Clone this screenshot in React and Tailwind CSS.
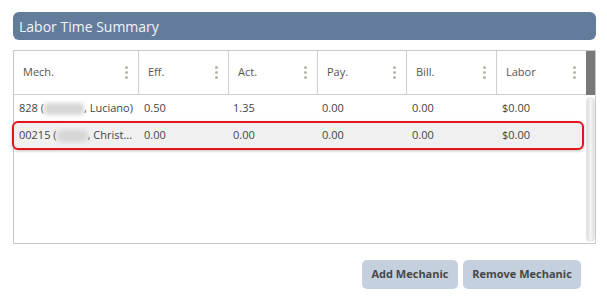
import React from 'react';

const cols = 'grid grid-cols-[125px_90px_89px_89px_90px_89px]';

const Dots = () => (
    <span className="flex flex-col gap-[2px] mr-[10px]">
        <span className="w-[3px] h-[3px] rounded-full bg-[#b3b8a4]" />
        <span className="w-[3px] h-[3px] rounded-full bg-[#b3b8a4]" />
        <span className="w-[3px] h-[3px] rounded-full bg-[#b3b8a4]" />
    </span>
);

const Hidden = ({ w }) => (
    <span className={`inline-block align-middle h-[12px] ${w} bg-[#d6d6d6] blur-[2px] rounded-sm`} />
);

const App = () => {
    const headers = ['Mech.', 'Eff.', 'Act.', 'Pay.', 'Bill.', 'Labor'];

    return (
        <div className="w-[607px] h-[300px] bg-white font-['Open_Sans',sans-serif] text-[11px] text-[#444]">
            <div className="pt-[12px] pl-[13px] pr-[11px]">
                {/* Title bar */}
                <div className="h-[28px] rounded-[6px] bg-[#647c9b] flex items-center pl-[6px] text-[14px] text-[#f2f4f7]">
                    Labor Time Summary
                </div>

                {/* Grid */}
                <div className="mt-[10px] h-[194px] border border-[#c9c9c9] flex">
                    <div className="w-[572px] flex flex-col">
                        <div className={`${cols} h-[44px] border-b border-[#cfcfcf]`}>
                            {headers.map((h, i) => (
                                <div
                                    key={h}
                                    className={`flex items-center justify-between pl-[9px] text-[#555] ${i < 5 ? 'border-r border-[#cfcfcf]' : ''}`}
                                >
                                    <span>{h}</span>
                                    <Dots />
                                </div>
                            ))}
                        </div>

                        <div className={`${cols} h-[26px] items-center`}>
                            <div className="pl-[5px] whitespace-nowrap">828 (<Hidden w="w-[40px]" />, Luciano)</div>
                            <div className="pl-[5px]">0.50</div>
                            <div className="pl-[4px]">1.35</div>
                            <div className="pl-[4px]">0.00</div>
                            <div className="pl-[5px]">0.00</div>
                            <div className="pl-[5px]">$0.00</div>
                        </div>

                        <div className="-ml-[2px] w-[572px] h-[29px] rounded-[6px] border-2 border-[#e4161b] bg-[#f0f0f0] shadow-[0_1px_3px_rgba(0,0,0,0.25)] flex items-center">
                            <div className={`${cols} w-full`}>
                                <div className="pl-[5px] whitespace-nowrap">00215 (<Hidden w="w-[31px]" />, Christ...</div>
                                <div className="pl-[5px]">0.00</div>
                                <div className="pl-[4px]">0.00</div>
                                <div className="pl-[4px]">0.00</div>
                                <div className="pl-[5px]">0.00</div>
                                <div className="pl-[5px]">$0.00</div>
                            </div>
                        </div>
                    </div>

                    {/* Scrollbar */}
                    <div className="w-[9px] flex flex-col">
                        <div className="h-[44px] bg-[#787878]" />
                        <div className="flex-1 pt-[2px] pb-[1px] flex">
                            <div className="w-[9px] rounded-full bg-gradient-to-r from-[#dcdcdc] via-[#f4f4f4] to-[#e2e2e2] border border-[#e6e6e6]" />
                        </div>
                    </div>
                </div>

                {/* Actions */}
                <div className="mt-[16px] flex justify-end gap-[5px] pr-[15px]">
                    <button className="h-[29px] w-[96px] rounded-[5px] bg-[#c5d0df] text-[11px] font-bold text-[#474747]">
                        Add Mechanic
                    </button>
                    <button className="h-[29px] w-[118px] rounded-[5px] bg-[#c5d0df] text-[11px] font-bold text-[#474747]">
                        Remove Mechanic
                    </button>
                </div>
            </div>
        </div>
    );
};

export default App;
